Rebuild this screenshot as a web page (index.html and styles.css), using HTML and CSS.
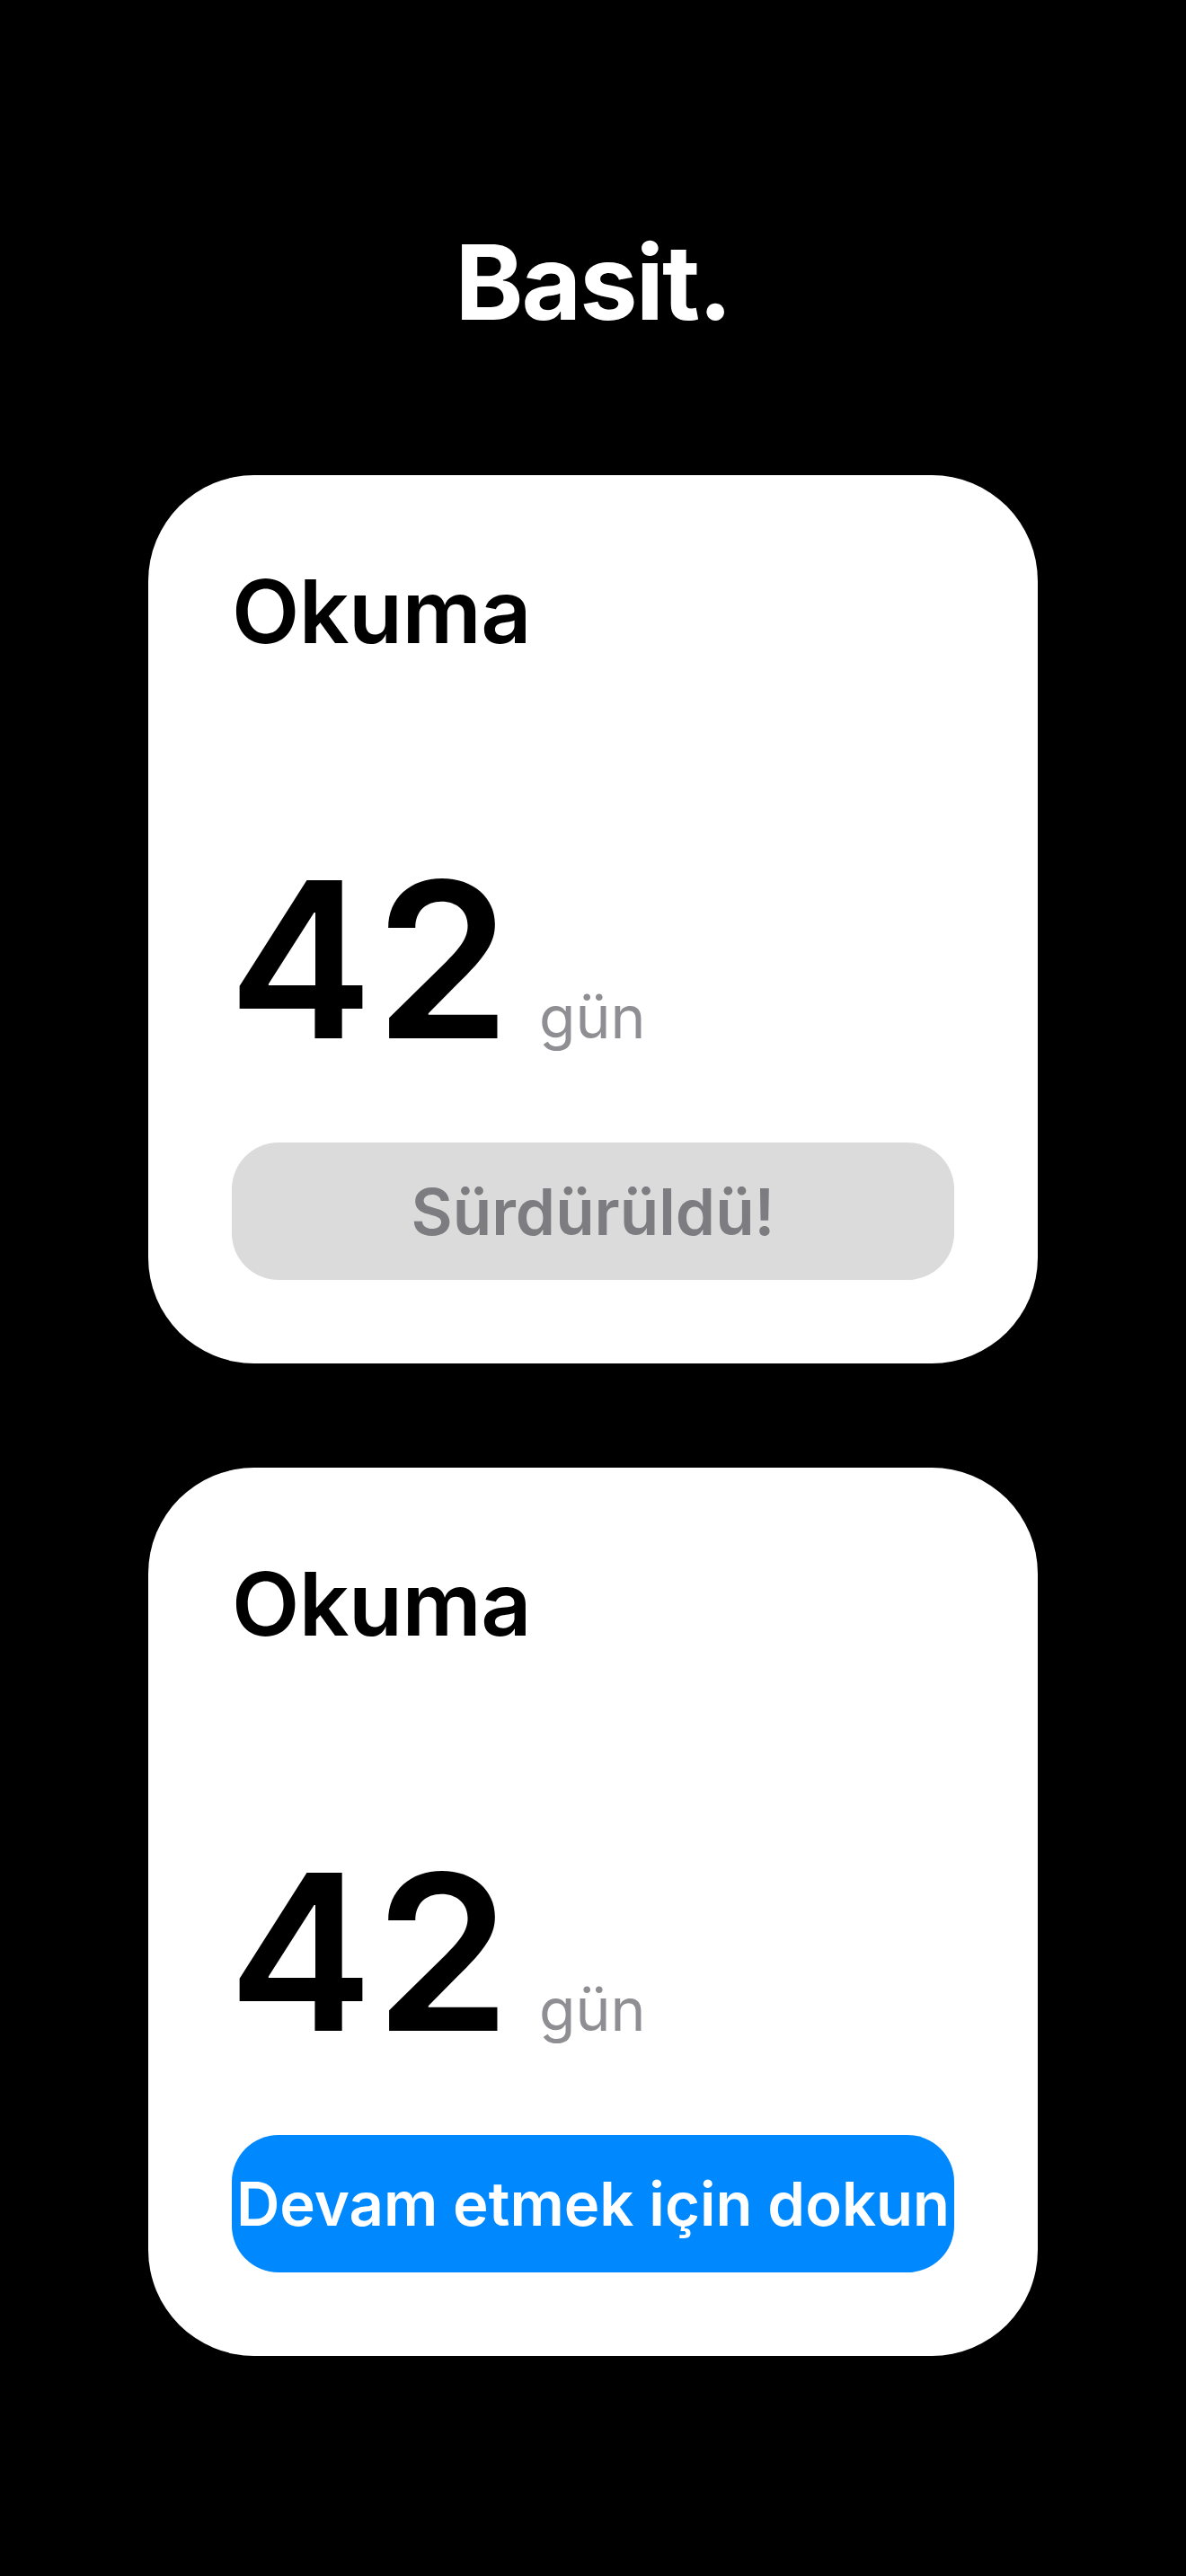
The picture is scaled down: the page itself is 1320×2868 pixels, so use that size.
FILE: index.html
```html
<!DOCTYPE html>
<html lang="tr">
<head>
<meta charset="utf-8">
<title>Basit.</title>
<link rel="stylesheet" href="styles.css">
</head>
<body>
<main class="page">
  <h1 class="headline">Basit.</h1>
  <section class="card">
    <h2 class="card-title">Okuma</h2>
    <div class="streak">
      <span class="streak-count">42</span>
      <span class="streak-unit">gün</span>
    </div>
    <button class="action action-done" type="button">Sürdürüldü!</button>
  </section>
  <section class="card">
    <h2 class="card-title">Okuma</h2>
    <div class="streak">
      <span class="streak-count">42</span>
      <span class="streak-unit">gün</span>
    </div>
    <button class="action action-continue" type="button">Devam etmek için dokun</button>
  </section>
</main>
</body>
</html>
```

FILE: styles.css
```css
html, body {
  margin: 0;
  padding: 0;
  background: #000;
}

body {
  font-family: Inter, "Noto Sans", "Liberation Sans", sans-serif;
  color: #000;
}

.page {
  min-height: 2868px;
  box-sizing: border-box;
  padding-top: 257px;
  display: flex;
  flex-direction: column;
  align-items: center;
}

.headline {
  margin: 0 0 157px;
  font-size: 115px;
  line-height: 1;
  font-weight: 700;
  color: #fff;
  letter-spacing: -2px;
}

.card {
  width: 990px;
  height: 989px;
  box-sizing: border-box;
  padding: 93px;
  background: #fff;
  border-radius: 118px;
  display: flex;
  flex-direction: column;
  margin-bottom: 116px;
}

.card-title {
  margin: 10px 0 0;
  font-size: 98px;
  line-height: 1;
  font-weight: 600;
  letter-spacing: -0.5px;
}

.streak {
  margin-top: auto;
  margin-bottom: 83px;
  display: flex;
  align-items: baseline;
}

.streak-count {
  font-size: 242px;
  line-height: 1;
  font-weight: 600;
  letter-spacing: 2px;
  margin-left: -4px;
}

.streak-unit {
  margin-left: 30px;
  font-size: 66px;
  line-height: 1;
  font-weight: 400;
  color: #8e8e93;
}

.action {
  width: 100%;
  height: 153px;
  flex: none;
  border: 0;
  padding: 0;
  border-radius: 52px;
  font-family: inherit;
  font-weight: 600;
  white-space: nowrap;
  display: flex;
  align-items: center;
  justify-content: center;
}

.action-done {
  background: #dbdbdb;
  color: #7c7c81;
  font-size: 71px;
}

.action-continue {
  background: #0088ff;
  color: #fff;
  font-size: 67px;
}
```
